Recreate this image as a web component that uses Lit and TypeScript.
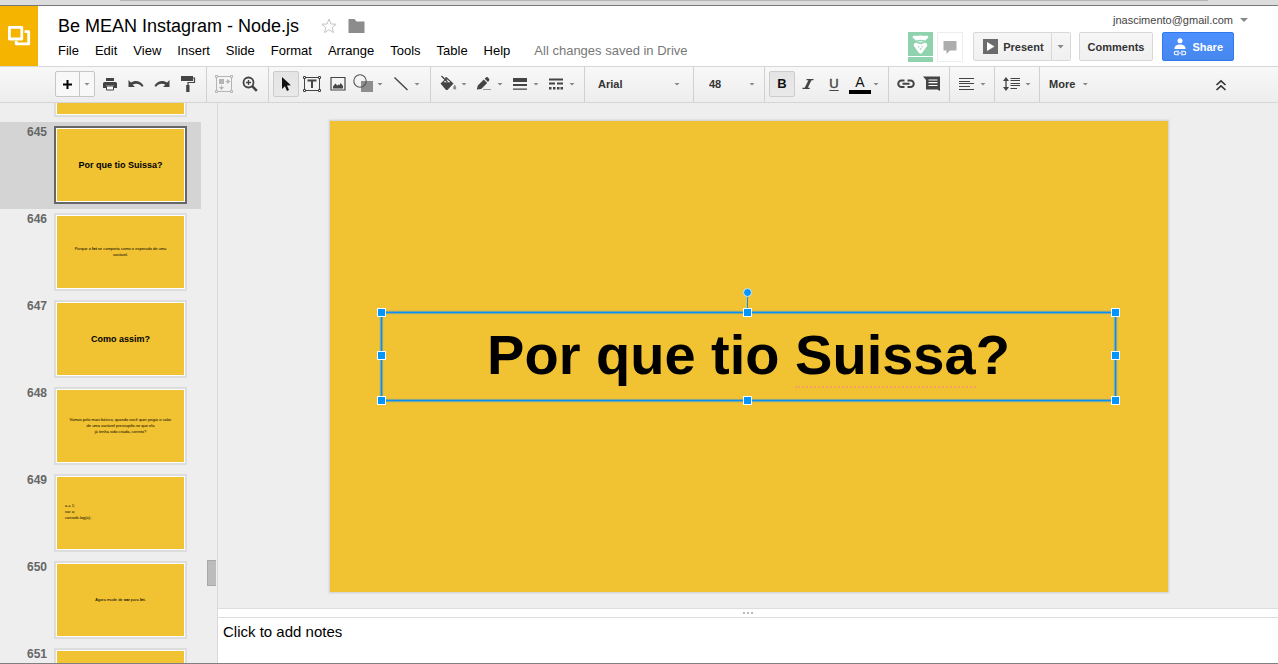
import { LitElement, html, svg, css, nothing } from "lit";
import type { TemplateResult } from "lit";
import { customElement, property, state } from "lit/decorators.js";
import { classMap } from "lit/directives/class-map.js";

const INK = "#444";

const icon = (w: number, h: number, body: unknown) => html`<svg
  width=${w}
  height=${h}
  viewBox="0 0 ${w} ${h}"
  aria-hidden="true"
>${body}</svg>`;

const icons = {
  logo: icon(24, 24, svg`<g fill="none" stroke="#fff" stroke-width="2.800" stroke-linejoin="round"><path d="M2.400 3.400h12.400v11.600H2.400z"/><path d="M17.500 7.700h4.200v12.200H9.200v-3"/></g>`),
  star: icon(16, 16, svg`<path d="M8 1l2 5 5.200.2-4.100 3.300 1.400 5.100L8 11.700l-4.500 2.900 1.400-5.100L.8 6.200 6 6z" fill="none" stroke="#c4c4c4" stroke-width="1"/>`),
  folder: icon(17, 14, svg`<path d="M.5 0h6l2 2.500h8V14H.5z" fill="#8c8c8c"/>`),
  print: icon(16, 16, svg`<g fill="${INK}"><path d="M4 2h8v3H4z"/><path d="M2.500 6h11A1.500 1.500 0 0 1 15 7.500V12h-3V9.500H4V12H1V7.500A1.500 1.500 0 0 1 2.500 6z"/><path d="M4.500 10h7v4h-7z" fill="#fff" stroke="${INK}"/></g>`),
  undo: icon(16, 16, svg`<path d="M.5 4v7h6.500L4.600 8.800c3-2 7-1.400 9.300 1.900l1.700-.7C13 4.800 7 3.600 2.900 6.600z" fill="${INK}"/>`),
  redo: icon(16, 16, svg`<path d="M15.500 4v7H9l2.400-2.200c-3-2-7-1.400-9.300 1.900L.4 10C3 4.800 9 3.600 13.100 6.600z" fill="${INK}"/>`),
  paint: icon(16, 18, svg`<path d="M1 1h12v5H1z" fill="${INK}"/><path d="M13 3h1.500v4.500H8V11" fill="none" stroke="${INK}" stroke-width="1.200"/><path d="M6.200 10h3.300v7H6.200z" fill="${INK}"/>`),
  fit: icon(20, 20, svg`<g fill="none" stroke="#b4b4b4"><path d="M2.500 2.500h15v15h-15z"/><g fill="#f2f2f2"><path d="M1.500 1.500h2v2h-2zM16.500 1.500h2v2h-2zM1.500 16.500h2v2h-2zM16.500 16.500h2v2h-2z"/></g></g><path d="M5 5h5v5H5zM11.500 7H13V5l3.500 2.500L13 10V8h-1.500zM7 11.500h1V13h2l-2.500 3L5 13h2z" fill="#b4b4b4"/>`),
  zoom: icon(16, 16, svg`<circle cx="6.500" cy="6.500" r="5" fill="none" stroke="${INK}" stroke-width="1.800"/><path d="M6.500 4v5M4 6.500h5" stroke="${INK}" stroke-width="1.300"/><path d="M10.200 10.200l4.600 4.600" stroke="${INK}" stroke-width="2.600"/>`),
  cursor: icon(12, 16, svg`<path d="M2 1v12l2.900-2.700L7 15l2-.9-2-4.600 3.900-.2z" fill="#111"/>`),
  textBox: icon(20, 18, svg`<g fill="none" stroke="${INK}"><path d="M2.500 2.500h15v13h-15z"/><g fill="#f2f2f2"><path d="M1.500 1.500h2v2h-2zM16.500 1.500h2v2h-2zM1.500 14.500h2v2h-2zM16.500 14.500h2v2h-2z"/></g></g><path d="M5.500 4.500h9v2h-3.500V13H9V6.500H5.500z" fill="${INK}"/>`),
  image: icon(16, 16, svg`<path d="M1 1.500h14v12.500H1z" fill="none" stroke="${INK}" stroke-width="1.200"/><path d="M3 12.500v-2l2.500-3 1.900 2.300 1.200-1.500.8.900 1.300-2.200L13 10v2.500z" fill="${INK}"/>`),
  shape: icon(22, 20, svg`<path d="M8 7h12v11H8z" fill="#8e8e8e"/><circle cx="7" cy="7" r="6.200" fill="none" stroke="#555" stroke-width="1.100"/>`),
  line: icon(16, 16, svg`<path d="M1.500 1.500l13 12.500" stroke="${INK}" stroke-width="1.400"/>`),
  bucket: icon(18, 18, svg`<path d="M1.500 8.500L8 2.500l6.500 6-6 6.500H7z" fill="${INK}"/><path d="M4.500 7.300L8 4.200l3.500 3.100z" fill="#f2f2f2"/><path d="M2.500 1l6 6M7 5V2" stroke="${INK}" stroke-width="1.300"/><path d="M15.700 9.500c2 2.600 2.200 5 0 5s-2-2.400 0-5z" fill="#8c8c8c"/>`),
  pen: icon(16, 16, svg`<path d="M.8 13.500l1-4 6-6 3.400 3.400-6 6zM8.700 2.700l1.500-1.500c.8-.8 3.900 2 3.100 3L12 5.900z" fill="${INK}"/><path d="M7 13.500h8" stroke="#999"/>`),
  weight: icon(14, 14, svg`<path d="M0 1h14v4H0zM0 7h14v2H0zM0 11.500h14v1.200H0z" fill="${INK}"/>`),
  dash: icon(14, 14, svg`<path d="M0 1.500h14v2H0zM0 5.500h6v2H0zM8 5.500h6v2H8zM0 10h2.500v2.500H0zM4 10h2.500v2.500H4zM8 10h2.500v2.500H8zM11.500 10H14v2.500h-2.500z" fill="${INK}"/>`),
  italic: icon(12, 14, svg`<path d="M4.500 2h7v1.300H9.500L5.800 10.700h1.900V12H.5v-1.300h2.200L6.400 3.300H4.500z" fill="${INK}"/>`),
  link: icon(20, 12, svg`<g fill="none" stroke="${INK}" stroke-width="2"><path d="M8.500 2.500h-3a3.200 3.200 0 0 0 0 6.500h3M11.500 2.500h3a3.200 3.200 0 0 1 0 6.500h-3M6.500 5.800h7"/></g>`),
  note: icon(20, 16, svg`<path d="M1 .5h17V15l-2.500-1.500H4V4z" fill="${INK}"/><path d="M6.500 4h9M6.500 6.700h9M6.500 9.500h9" stroke="#fff" stroke-width="1.200"/>`),
  align: icon(16, 14, svg`<path d="M0 1.500h15M0 4.500h11M0 6.500h15M0 9.500h11M0 12.500h15" stroke="${INK}"/>`),
  spacing: icon(18, 14, svg`<path d="M3 2v10" stroke="${INK}" stroke-width="1.300"/><path d="M0 4l3-4 3 4zM0 10l3 4 3-4z" fill="${INK}"/><path d="M7.500 1.500H17M7.500 3.500H17M7.500 6.500H17M7.500 8.500H17M7.500 11.500H14" stroke="${INK}"/>`),
  collapse: icon(12, 12, svg`<path d="M1.500 6L6 1.800 10.500 6M1.500 11L6 6.800l4.500 4.200" fill="none" stroke="#333" stroke-width="1.600"/>`),
  bubble: icon(14, 14, svg`<path d="M.5 1h13v9.500H7L3.500 14v-3.500h-3z" fill="#adadad"/>`),
  play: icon(15, 15, svg`<path d="M0 0h15v15H0z" fill="#6b6b6b"/><path d="M4 3v9l7.500-4.500z" fill="#fff"/>`),
  share: icon(14, 18, svg`<circle cx="7" cy="2.800" r="2.500" fill="#fff"/><path d="M1.500 11C1.500 7.500 4 6.500 7 6.500s5.500 1 5.500 4.500z" fill="#fff"/><g fill="none" stroke="#fff" stroke-width="1.100"><path d="M6 13.200H3a1.700 1.700 0 0 0 0 3.500h3M8 13.200h3a1.700 1.700 0 0 1 0 3.500H8M4 15h6"/></g>`),
  avatar: icon(25, 24, svg`<path d="M0 0h25v24H0z" fill="#8fd3ae"/><path d="M5 4.200c.8-1.200 2.300-.7 3.200-.2 2.800-.7 5.800-.7 8.600 0 .9-.5 2.400-1 3.200.2s.2 2.200-1 2.300l-1.700 1.900c-3-.8-6.600-.8-9.600 0L6 6.500c-1.200-.1-1.800-1.100-1-2.300z" fill="#fff"/><path d="M8.500 9.200c2.500-.7 5.500-.7 8 0l-4 1.600z" fill="#d2eedd"/><path d="M5.800 13c.2-2 2-2.800 3.400-1.700l3.300.9 3.300-.9c1.400-1.100 3.200-.3 3.400 1.700.1 1.400-1 2-1.500 3L14 21c-1 .9-2 .9-3 0l-3.700-5c-.5-1-1.600-1.600-1.500-3z" fill="#fff"/><path d="M10.300 14.200h1v1h-1zM13.700 14.200h1v1h-1zM11.800 16.500h1.400v1h-1.400z" fill="#63b98a"/>`),
};

interface Slide {
  number?: number;
  kind: "title" | "body" | "code" | "blank";
  content?: TemplateResult;
}

const SLIDES: Slide[] = [
  { kind: "blank" },
  { number: 645, kind: "title", content: html`Por que tio Suissa?` },
  { number: 646, kind: "body", content: html`Porque o <b>let</b> se comporta como o esperado de uma<br />variável.` },
  { number: 647, kind: "title", content: html`Como assim?` },
  { number: 648, kind: "body", content: html`Vamos pelo mais básico, quando você quer pegar o valor<br />de uma variável pressupõe-se que ela<br />já tenha sido criada, correto?` },
  { number: 649, kind: "code", content: html`a = 1;<br />var a;<br />console.log(a);` },
  { number: 650, kind: "body", content: html`Agora mude de <b>var</b> para <b>let</b>.` },
  { number: 651, kind: "blank" },
];

const base = css`
  :host {
    box-sizing: border-box;
  }
  *,
  *::before,
  *::after {
    box-sizing: border-box;
  }
  button,
  select,
  textarea {
    font: inherit;
    color: inherit;
    margin: 0;
    padding: 0;
    border: 0;
    background: none;
    border-radius: 0;
  }
  svg {
    display: block;
    flex: none;
  }
  .caret {
    flex: none;
    width: 6px;
    height: 3px;
    background: #888;
    clip-path: polygon(0 0, 100% 0, 50% 100%);
  }
`;

@customElement("doc-header")
class DocHeader extends LitElement {
  static styles = [
    base,
    css`
      :host {
        display: flex;
        height: 60px;
        background: #fff;
      }
      .logo {
        display: flex;
        align-items: center;
        justify-content: center;
        width: 38px;
        background: #f4b400;
      }
      .info {
        flex: 1;
        min-width: 0;
        padding: 9px 0 0 20px;
      }
      .heading {
        display: flex;
        align-items: center;
        height: 22px;
      }
      h1 {
        margin: 0 22px 0 0;
        font-size: 18px;
        line-height: 22px;
        font-weight: 400;
        white-space: nowrap;
      }
      .star {
        margin-right: 11px;
      }
      nav {
        display: flex;
        gap: 16px;
        margin-top: 6px;
        font-size: 13px;
        line-height: 16px;
        white-space: nowrap;
      }
      .saved {
        margin-left: 8px;
        color: #777;
      }
      .account {
        display: flex;
        flex-direction: column;
        align-items: flex-end;
        padding: 8px 30px 0 0;
      }
      .email {
        display: flex;
        align-items: center;
        gap: 7px;
        font-size: 11px;
        line-height: 12px;
        color: #444;
      }
      .email .caret {
        width: 8px;
        height: 4px;
      }
      .actions {
        display: flex;
        align-items: flex-start;
        margin: 6px 14px 0 0;
        font-size: 11px;
        font-weight: 700;
        color: #333;
      }
      .avatar {
        display: grid;
        gap: 1px;
        margin-right: 4px;
      }
      .avatar::after {
        content: "";
        height: 5px;
        background: #8fd3ae;
      }
      .chat {
        display: flex;
        align-items: center;
        justify-content: center;
        width: 26px;
        height: 30px;
        margin-right: 10px;
        border: 1px solid #eee;
      }
      .split {
        display: flex;
        margin-right: 8px;
      }
      .button {
        display: flex;
        align-items: center;
        justify-content: center;
        gap: 5px;
        height: 29px;
        padding: 0 8px;
        border: 1px solid #d8d8d8;
        border-radius: 2px;
        background: linear-gradient(#f6f6f6, #f0f0f0);
      }
      .split .button:first-child {
        padding: 0 7px 0 9px;
        border-radius: 2px 0 0 2px;
      }
      .split .button:last-child {
        width: 19px;
        padding: 0;
        border-left: 0;
        border-radius: 0 2px 2px 0;
      }
      .split .caret {
        height: 4px;
        width: 7px;
      }
      .share {
        margin-left: 9px;
        padding: 0 10px;
        color: #fff;
        border-color: #3079ed;
        background: linear-gradient(#4d90fe, #4787ed);
      }
    `,
  ];

  render() {
    const menus = ["File", "Edit", "View", "Insert", "Slide", "Format", "Arrange", "Tools", "Table", "Help"];
    return html`
      <button class="logo" aria-label="Slides home">${icons.logo}</button>
      <div class="info">
        <div class="heading">
          <h1>Be MEAN Instagram - Node.js</h1>
          <button class="star" aria-label="Star">${icons.star}</button>
          <button aria-label="Move to folder">${icons.folder}</button>
        </div>
        <nav>
          ${menus.map((m) => html`<button>${m}</button>`)}
          <span class="saved">All changes saved in Drive</span>
        </nav>
      </div>
      <div class="account">
        <button class="email">jnascimento@gmail.com<span class="caret"></span></button>
        <div class="actions">
          <div class="avatar">${icons.avatar}</div>
          <button class="chat" aria-label="Chat">${icons.bubble}</button>
          <div class="split">
            <button class="button">${icons.play}Present</button>
            <button class="button" aria-label="Present options"><span class="caret"></span></button>
          </div>
          <button class="button">Comments</button>
          <button class="button share">${icons.share}Share</button>
        </div>
      </div>
    `;
  }
}

@customElement("doc-toolbar")
class DocToolbar extends LitElement {
  @state() private bold = true;

  static styles = [
    base,
    css`
      :host {
        display: flex;
        height: 37px;
        padding-left: 55px;
        border-top: 1px solid #d6d6d6;
        border-bottom: 1px solid #d6d6d6;
        background: linear-gradient(#f8f8f8, #ededed);
        font-size: 11px;
        font-weight: 700;
        color: #333;
      }
      .group {
        display: flex;
        align-items: center;
        padding: 0 5px 1px 4px;
        border-right: 1px solid #d0d0d0;
      }
      .group.tight {
        padding: 0 4px 1px;
      }
      .group.first {
        padding-left: 0;
      }
      .group.last {
        border: 0;
        padding-left: 9px;
      }
      .tool {
        display: flex;
        align-items: center;
        justify-content: center;
        width: 26px;
        height: 26px;
      }
      .tool.pressed {
        border: 1px solid #ccc;
        border-radius: 2px;
        background: linear-gradient(#e4e4e4, #e9e9e9);
      }
      .menu {
        display: flex;
        align-items: center;
        width: 36px;
        height: 26px;
      }
      .menu.wide {
        width: 37px;
      }
      .glyph {
        display: flex;
        justify-content: center;
        width: 26px;
      }
      .new {
        display: flex;
        height: 26px;
        margin-right: 2px;
        border: 1px solid #c6c6c6;
        border-radius: 2px;
        background: #f8f8f8;
      }
      .new button {
        display: flex;
        align-items: center;
        justify-content: center;
        width: 14px;
      }
      .new button:first-child {
        width: 24px;
        border-right: 1px solid #c6c6c6;
      }
      .combo {
        display: grid;
        align-items: center;
        padding-bottom: 1px;
        border-right: 1px solid #d0d0d0;
      }
      .combo select {
        grid-area: 1 / 1;
        appearance: none;
        height: 26px;
        outline: 0;
      }
      .combo .caret {
        grid-area: 1 / 1;
        justify-self: end;
        pointer-events: none;
      }
      .combo.font {
        width: 109px;
      }
      .combo.font .caret {
        margin-right: 13px;
      }
      .combo.font select {
        padding-left: 13px;
      }
      .combo.size {
        width: 71px;
      }
      .combo.size .caret {
        margin-right: 9px;
      }
      .combo.size select {
        padding-left: 15px;
      }
      .letter {
        font-size: 13px;
        line-height: 14px;
        color: #444;
      }
      .letter.under {
        font-weight: 400;
        text-decoration: underline;
        text-underline-offset: 2px;
        -webkit-text-stroke: 0.4px #444;
      }
      .bold {
        color: #111;
      }
      .color {
        display: block;
        width: 22px;
        font-size: 14px;
        line-height: 16px;
        font-weight: 400;
        color: #111;
        border-bottom: 4px solid #000;
        text-align: center;
      }
      .more {
        display: flex;
        align-items: center;
        gap: 7px;
      }
      .collapse {
        margin: 0 51px 0 auto;
      }
    `,
  ];

  private tool(label: string, glyph: unknown, pressed = false) {
    return html`<button class=${classMap({ tool: true, pressed })} aria-label=${label}>${glyph}</button>`;
  }

  private menu(label: string, glyph: unknown, wide = false) {
    return html`<button class=${classMap({ menu: true, wide })} aria-label=${label}>
      <span class="glyph">${glyph}</span><span class="caret"></span>
    </button>`;
  }

  render() {
    return html`
      <div class="group first">
        <div class="new">
          <button aria-label="New slide">
            ${icon(9, 9, svg`<path d="M3.500 0h2v3.500H9v2H5.500V9h-2V5.500H0v-2h3.500z" fill="#000"/>`)}
          </button>
          <button aria-label="New slide with layout"><span class="caret"></span></button>
        </div>
        ${this.tool("Print", icons.print)} ${this.tool("Undo", icons.undo)} ${this.tool("Redo", icons.redo)}
        ${this.tool("Paint format", icons.paint)}
      </div>
      <div class="group">${this.tool("Zoom to fit", icons.fit)} ${this.tool("Zoom", icons.zoom)}</div>
      <div class="group">
        ${this.tool("Select", icons.cursor, true)} ${this.tool("Text box", icons.textBox)}
        ${this.tool("Image", icons.image)} ${this.menu("Shape", icons.shape, true)}
        ${this.menu("Line", icons.line, true)}
      </div>
      <div class="group">
        ${this.menu("Fill color", icons.bucket)} ${this.menu("Line color", icons.pen)}
        ${this.menu("Line weight", icons.weight)} ${this.menu("Line dash", icons.dash)}
      </div>
      <div class="combo font">
        <select aria-label="Font"><option>Arial</option></select><span class="caret"></span>
      </div>
      <div class="combo size">
        <select aria-label="Font size"><option>48</option></select><span class="caret"></span>
      </div>
      <div class="group">
        <button
          class=${classMap({ tool: true, pressed: this.bold })}
          aria-label="Bold"
          aria-pressed=${this.bold}
          @click=${() => (this.bold = !this.bold)}
        ><span class="letter bold">B</span></button>
        ${this.tool("Italic", icons.italic)} ${this.tool("Underline", html`<span class="letter under">U</span>`)}
        ${this.menu("Text color", html`<span class="color">A</span>`)}
      </div>
      <div class="group tight">${this.tool("Insert link", icons.link)} ${this.tool("Insert comment", icons.note)}</div>
      <div class="group tight">${this.menu("Align", icons.align)}</div>
      <div class="group tight">${this.menu("Line spacing", icons.spacing)}</div>
      <div class="group last"><button class="more">More<span class="caret"></span></button></div>
      <button class="collapse" aria-label="Hide menus">${icons.collapse}</button>
    `;
  }
}

@customElement("slide-strip")
class SlideStrip extends LitElement {
  @property({ type: Number }) selected = 645;

  static styles = [
    base,
    css`
      :host {
        display: flex;
        justify-content: space-between;
        overflow: hidden;
        width: 218px;
        border-right: 1px solid #d9d9d9;
        background: #eee;
      }
      .list {
        width: 201px;
        margin-top: -68px;
      }
      .row {
        display: flex;
        align-items: flex-start;
        width: 100%;
        height: 87px;
        padding: 4px 0 0;
        text-align: left;
      }
      .row.on {
        background: #d4d4d4;
      }
      .number {
        width: 47px;
        margin-right: 7px;
        text-align: right;
        font-size: 12px;
        line-height: 12px;
        font-weight: 700;
        color: #666;
      }
      .thumb {
        display: flex;
        align-items: center;
        justify-content: center;
        width: 133px;
        height: 78px;
        border: 2px solid #ddd;
        outline: 1px solid #fff;
        outline-offset: -3px;
        background: #f1c232;
        color: #000;
        text-align: center;
        font-size: 4px;
        line-height: 6px;
        white-space: nowrap;
      }
      .on .thumb {
        border-color: #666;
      }
      .title {
        font-size: 9px;
        line-height: 12px;
        font-weight: 700;
      }
      .code {
        justify-content: flex-start;
        padding: 0 0 2px 9px;
        text-align: left;
      }
      .track {
        width: 10px;
      }
      .handle {
        width: 9px;
        height: 26px;
        margin-top: 457px;
        border: 1px solid #a8a8a8;
        border-right: 0;
        background: #bcbcbc;
      }
    `,
  ];

  render() {
    return html`
      <div class="list">
        ${SLIDES.map(
          (s) => html`<button
            class=${classMap({ row: true, on: s.number === this.selected })}
            @click=${() => (this.selected = s.number ?? this.selected)}
          >
            <span class="number">${s.number ?? nothing}</span>
            <span class=${classMap({ thumb: true, [s.kind]: true })}><span>${s.content ?? nothing}</span></span>
          </button>`
        )}
      </div>
      <div class="track"><div class="handle"></div></div>
    `;
  }
}

@customElement("slide-stage")
class SlideStage extends LitElement {
  static styles = [
    base,
    css`
      :host {
        display: flex;
        flex-direction: column;
        min-width: 0;
      }
      .canvas {
        flex: 1;
        min-height: 0;
        display: flex;
        justify-content: center;
        padding: 18px 0 16px 1px;
        background: #eee;
      }
      .slide {
        position: relative;
        height: 100%;
        aspect-ratio: 838 / 471;
        background: #f1c232;
        box-shadow: 0 0 2px 1px #ccc;
      }
      .box {
        position: absolute;
        left: 6.2%;
        top: 40.5%;
        width: 87.6%;
        height: 18.9%;
        display: flex;
        align-items: center;
        justify-content: center;
        border: 1px solid #0091fb;
        box-shadow: 0 0 1px 1px #7fa596, inset 0 0 1px 1px #7fa596;
      }
      .box h2 {
        margin: 0;
        padding-bottom: 2px;
        font-size: 56px;
        line-height: 64px;
        font-weight: 700;
        white-space: nowrap;
      }
      .spell {
        border-bottom: 2px dotted #f3a260;
      }
      .grip {
        position: absolute;
        width: 9px;
        height: 9px;
        margin: -5px;
        border: 1px solid #fff;
        background: #0096ff;
      }
      .n {
        top: 0;
      }
      .m {
        top: 50%;
      }
      .s {
        top: 100%;
        margin-top: -4px;
      }
      .w {
        left: 0;
      }
      .c {
        left: 50%;
      }
      .e {
        left: 100%;
        margin-left: -4px;
      }
      .stem {
        position: absolute;
        left: 50%;
        bottom: 100%;
        width: 1px;
        height: 20px;
        margin-left: -1px;
        background: #0096ff;
      }
      .stem::before {
        content: "";
        position: absolute;
        left: -4px;
        top: -5px;
        width: 9px;
        height: 9px;
        border: 1px solid #d8ecf5;
        border-radius: 50%;
        background: #0096ff;
      }
      .divider {
        display: flex;
        align-items: center;
        justify-content: center;
        gap: 2px;
        height: 10px;
        border-top: 1px solid #ddd;
        border-bottom: 1px solid #ddd;
        background: #fff;
      }
      .divider i {
        width: 2px;
        height: 2px;
        background: #bbb;
      }
      .notes {
        height: 45px;
        width: 100%;
        padding: 5px;
        resize: none;
        outline: 0;
        background: #fff;
        font-size: 15px;
        line-height: 18px;
        color: #000;
      }
      .notes::placeholder {
        color: #000;
      }
    `,
  ];

  render() {
    const grips = ["n w", "n c", "n e", "m w", "m e", "s w", "s c", "s e"];
    return html`
      <div class="canvas">
        <div class="slide">
          <div class="box">
            <h2>Por que tio <span class="spell">Suissa</span>?</h2>
            <span class="stem"></span>
            ${grips.map((g) => html`<span class="grip ${g}"></span>`)}
          </div>
        </div>
      </div>
      <div class="divider"><i></i><i></i><i></i></div>
      <textarea class="notes" aria-label="Speaker notes" placeholder="Click to add notes"></textarea>
    `;
  }
}

@customElement("app-root")
class AppRoot extends LitElement {
  static styles = [
    base,
    css`
      :host {
        display: flex;
        flex-direction: column;
        height: 100vh;
        overflow: hidden;
        border-bottom: 1px solid #808080;
        font-family: "Liberation Sans", Arial, sans-serif;
        color: #000;
      }
      .chrome {
        flex: none;
        height: 6px;
        padding: 0 70px 0 120px;
        border-bottom: 1px solid #777;
        background: #dcdcdc;
      }
      .chrome div {
        height: 1px;
        background: #b4b4b4;
      }
      doc-header,
      doc-toolbar {
        flex: none;
      }
      .work {
        flex: 1;
        min-height: 0;
        display: grid;
        grid-template-columns: auto 1fr;
        grid-template-rows: 100%;
      }
    `,
  ];

  render() {
    return html`
      <div class="chrome"><div></div></div>
      <doc-header></doc-header>
      <doc-toolbar></doc-toolbar>
      <div class="work">
        <slide-strip></slide-strip>
        <slide-stage></slide-stage>
      </div>
    `;
  }
}
